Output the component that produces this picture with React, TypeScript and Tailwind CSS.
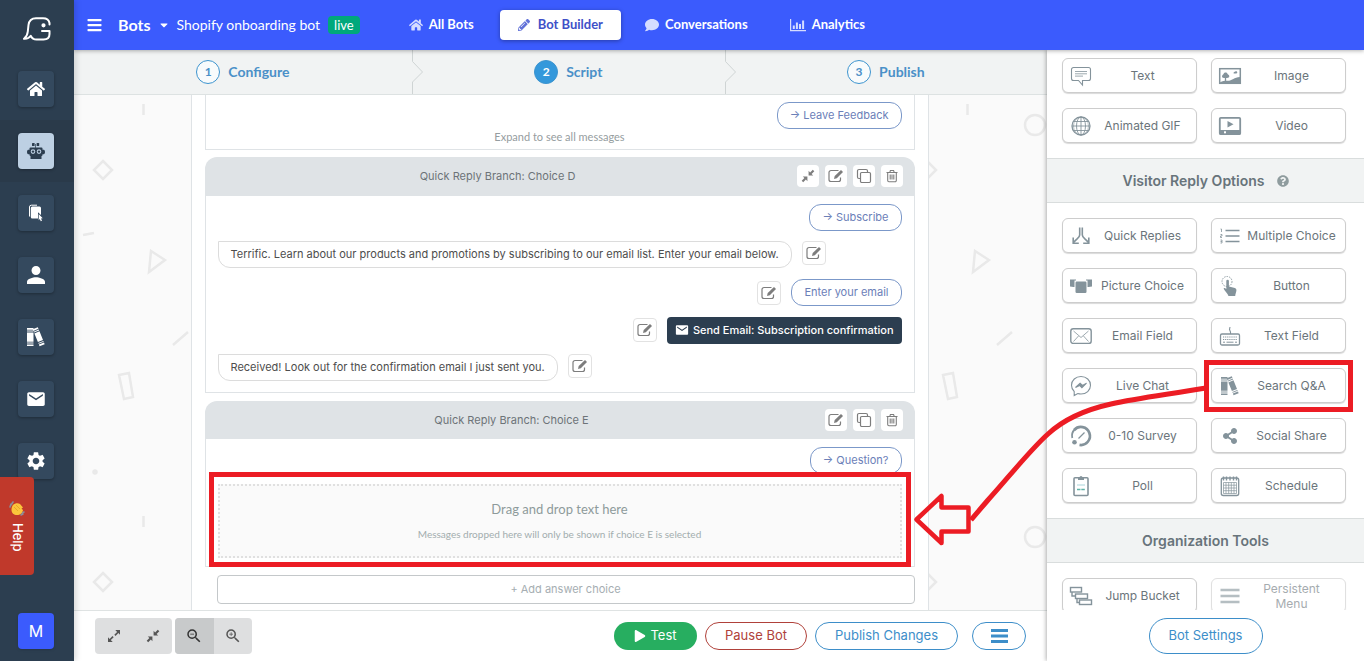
import React from "react";
import { FaBars, FaCaretDown, FaComment, FaHome, FaPencilAlt, FaPlay, FaQuestionCircle, FaShareAlt } from "react-icons/fa";
import { IoMdMail, IoMdPerson } from "react-icons/io";
import { MdSettings, MdZoomIn, MdZoomOut } from "react-icons/md";

type IconProps = { className?: string };

/* ---------- drawings ---------- */

const Logo = () => (
  <svg viewBox="0 0 28 24" className="h-6 w-7" fill="none" stroke="#fff" strokeWidth="2" strokeLinejoin="round" strokeLinecap="round">
    <path d="M26.500 7.500V6C26 3 23.500 1.200 20 1.200H13C8.500 1.200 6 4 5.500 8L4.800 14.500C4.400 18 3.500 20 1 21.800C4 22 6.200 21.200 7.800 18.800C9 21.500 11 22.500 13.500 22.500H20.500C24.300 22.500 26.500 20.500 26.500 17V14H19" />
    <circle cx="20.500" cy="8.300" r="1.100" fill="#fff" />
  </svg>
);

const Robot = ({ className }: IconProps) => (
  <svg viewBox="0 0 18 16" className={className} fill="currentColor">
    <rect x="5" y="0" width="2.600" height="3" rx="0.500" />
    <rect x="9.600" y="0" width="2.600" height="3" rx="0.500" />
    <path d="M8.300 1h.7v4h-.7z" />
    <path fillRule="evenodd" d="M3.500 4.500h11a1 1 0 0 1 1 1v1.300h1.300c.7 0 1.200 1.100 1.200 2.200s-.5 2.200-1.200 2.200h-1.300v.8a1 1 0 0 1-1 1h-11a1 1 0 0 1-1-1v-.8H1.200C.5 11.200 0 10.100 0 9s.5-2.200 1.200-2.200h1.300V5.500a1 1 0 0 1 1-1zM6 6.300a2.300 2.300 0 1 0 0 4.600 2.300 2.300 0 0 0 0-4.600zm6 0a2.300 2.300 0 1 0 0 4.600 2.300 2.300 0 0 0 0-4.600z" />
    <circle cx="6" cy="8.600" r="1.200" />
    <circle cx="12" cy="8.600" r="1.200" />
    <path d="M3.500 13h11v3h-11z" />
  </svg>
);

const Pages = ({ className }: IconProps) => (
  <svg viewBox="0 0 18 18" className={className} fill="currentColor">
    <path d="M2.500 12.500V3a1.800 1.800 0 0 1 1.800-1.800H10" fill="none" stroke="currentColor" />
    <path d="M5.300 2.600h7.200a1.500 1.500 0 0 1 1.500 1.500v7l-3-2.800v6.200H5.300a1.500 1.500 0 0 1-1.500-1.500V4.100a1.500 1.500 0 0 1 1.500-1.500z" />
    <path d="M11.700 10l4 4.200-1.700.3 1 2.200-1.200.6-1-2.300-1.100 1.200z" />
  </svg>
);

const Books = ({ className }: IconProps) => (
  <svg viewBox="0 0 20 20" className={className} fill="currentColor">
    <path d="M1 1h6.500v1.800H1zM1 3.600h6.500v1H1zM1 5.500h6.500v9.200H1zM1 15.600h6.500v1H1zM1 17.400h6.500V19H1z" />
    <g transform="rotate(-22 12 10)">
      <path d="M10 .8h5.500v1.800H10zM10 3.400h5.500v1H10zM10 5.300h5.500v9.400H10zM10 15.600h5.500v1H10zM10 17.400h5.500v1.700H10z" />
    </g>
  </svg>
);

const Wave = () => (
  <svg viewBox="0 0 16 16" className="h-4 w-4" fill="none">
    <path d="M2 4l2-3M1 6l1-3M12 14l2-1M13 12l2-1" stroke="#8b8f99" strokeWidth="1.600" strokeLinecap="round" />
    <path d="M4 4c2-2 5-2.500 7-1l3 3.500-1.500 1L14 9c-.5 3-3 5-6 5s-5.500-2-5.500-5C2.500 7 3 5 4 4z" fill="#fbc53b" />
    <path d="M7 4l4 4M5 6l4 4" stroke="#e2a023" strokeWidth="0.800" />
  </svg>
);

const BarChart = ({ className }: IconProps) => (
  <svg viewBox="0 0 16 14" className={className} fill="currentColor">
    <path d="M0 1h1.200v11H16v1.200H0zM2.800 7.500h2V11h-2zM5.900 4.500h2V11h-2zM9 6h2v5H9zM12.100 2.500h2V11h-2z" />
  </svg>
);

const EditIcon = ({ className }: IconProps) => (
  <svg viewBox="0 0 16 14" className={className} fill="none" stroke="currentColor">
    <path d="M10.500 1.500H3A2 2 0 0 0 1 3.500v7a2 2 0 0 0 2 2h7.500a2 2 0 0 0 2-2V8.500" strokeWidth="1.200" />
    <path d="M6 10l.7-2.900L13 1l2 2-6.200 6.300z" fill="currentColor" stroke="none" />
  </svg>
);

const CopyIcon = ({ className }: IconProps) => (
  <svg viewBox="0 0 16 16" className={className} fill="none" stroke="currentColor" strokeWidth="1.200">
    <path d="M4.500 10.500H3a1.500 1.500 0 0 1-1.500-1.500V3A1.500 1.500 0 0 1 3 1.500h7A1.500 1.500 0 0 1 11.500 3v1.500" />
    <rect x="4.500" y="4.500" width="10" height="10" rx="1.200" />
  </svg>
);

const TrashIcon = ({ className }: IconProps) => (
  <svg viewBox="0 0 14 14" className={className} fill="none" stroke="currentColor" strokeWidth="1.100">
    <path d="M1.500 3.500h11M4.800 3.300l.6-1.800h3.200l.6 1.800M2.700 3.500v8a1.200 1.200 0 0 0 1.200 1.200h6.200a1.200 1.200 0 0 0 1.200-1.200v-8M5.200 5.500v5M7 5.500v5M8.800 5.500v5" />
  </svg>
);

const Shrink = ({ className }: IconProps) => (
  <svg viewBox="0 0 14 14" className={className} fill="currentColor">
    <path d="M7.600 1.800v4.600h4.600l-1.600-1.500 2.700-2.600-1.500-1.500-2.700 2.600zM6.400 12.200V7.600H1.800l1.600 1.500-2.700 2.600 1.500 1.500 2.700-2.600z" />
  </svg>
);

const Grow = ({ className }: IconProps) => (
  <svg viewBox="0 0 14 14" className={className} fill="currentColor">
    <path d="M8.300 1H13v4.700l-1.600-1.600-2.900 2.900-1.200-1.200 2.800-2.900zM5.700 13H1V8.300l1.600 1.600L5.500 7l1.200 1.200L3.800 11.100z" />
  </svg>
);

const ToolGlyph = ({ name }: { name: string }) => {
  const svg = (children: React.ReactNode) => (
    <svg viewBox="0 0 24 24" className="h-6 w-6 shrink-0" fill="none" stroke="currentColor" strokeWidth="1.100">
      {children}
    </svg>
  );
  switch (name) {
    case "Text":
      return svg(
        <>
          <path d="M4.500 3.500h15a2 2 0 0 1 2 2v9a2 2 0 0 1-2 2h-6v4.500l-4-4.500h-5a2 2 0 0 1-2-2v-9a2 2 0 0 1 2-2z" />
          <path d="M6 7.500h12M6 9.800h12M6 12.100h8" strokeWidth="0.800" />
        </>
      );
    case "Image":
      return svg(
        <>
          <rect x="1.700" y="4.700" width="20.600" height="14.600" strokeWidth="1.500" />
          <path d="M2 18.500c4-2.500 7-1.500 9-1.800 3-.5 5-3 11-3.700v6.500H2z" fill="currentColor" stroke="none" />
          <path d="M7.500 17V11" strokeWidth="1.300" />
          <path d="M4 12.500c0-1.800 1.500-1.800 1.800-3 .6-1.300 3-1.300 3.500 0 .4 1 2 1.200 2 2.800 0 1.700-2 1.900-3.800 1.400C5.700 14.200 4 14 4 12.500zM15.500 9c0-1 1.200-1.200 1.800-1.600.9-.6 1.900.1 2 .8 0 .8-.7 1.300-1.700 1.300S15.500 9.800 15.500 9z" fill="currentColor" stroke="none" />
        </>
      );
    case "Animated GIF":
      return svg(
        <>
          <circle cx="12" cy="12" r="9" strokeWidth="1.300" />
          <path d="M12 3v18M3 12h18M4.500 7.500h15M4.500 16.500h15" strokeWidth="0.900" />
          <ellipse cx="12" cy="12" rx="4.500" ry="9" strokeWidth="0.900" />
          <ellipse cx="12" cy="12" rx="7.500" ry="9" strokeWidth="0.600" />
        </>
      );
    case "Video":
      return svg(
        <>
          <rect x="1.800" y="3.800" width="20.400" height="16.400" rx="1" strokeWidth="1.800" />
          <path d="M2 16h20v4.500H2z" fill="currentColor" stroke="none" />
          <path d="M9.500 7l6 3.200-6 3.200z" fill="currentColor" stroke="none" />
          <rect x="6" y="17.300" width="2" height="2" fill="#fff" stroke="none" />
        </>
      );
    case "Quick Replies":
      return svg(
        <>
          <path d="M10.700 3.500v7.500c0 3-3.500 4-6 7.500M13.300 3.500v7.500c0 3 3.500 4 6 7.500" strokeWidth="1.600" />
          <path d="M4.200 13.500v5.700h5.600M19.800 13.500v5.700h-5.600" strokeWidth="1.600" />
        </>
      );
    case "Multiple Choice":
      return svg(
        <>
          <path d="M7.500 6.500h14M7.500 12h14M7.500 17.500h14" strokeWidth="1.500" />
          <path d="M2.500 5h1v3M2.500 10.500h1.500v1.500H2.500v1.500H4M2.500 16H4v3H2.500M2.500 17.500H4" strokeWidth="0.800" />
        </>
      );
    case "Picture Choice":
      return svg(
        <g fill="currentColor" stroke="none">
          <path d="M1 5.500h6v1H5.500v6.500H4.500L1 12.500zM17 5.500h6v7l-3.500.5h-1V6.500H17z" />
          <rect x="6.500" y="7.500" width="11" height="11.500" rx="1.200" />
        </g>
      );
    case "Button":
      return svg(
        <>
          <circle cx="9" cy="7.500" r="5" strokeWidth="0.900" strokeDasharray="1.500 1" />
          <path d="M8.300 7a1.300 1.300 0 0 1 2.600 0v5.500l6 1.500c1.200.4 1.600 1.300 1.500 2.500-.2 2-.9 3-1.200 5.500h-6.700c-.7-2.500-3.500-4.500-4.700-7-.4-1.200 1-1.500 2.500.1z" fill="currentColor" stroke="none" />
        </>
      );
    case "Email Field":
      return svg(
        <>
          <rect x="1.800" y="4.800" width="20.400" height="14.600" rx="2.500" strokeWidth="1.400" />
          <path d="M4.500 7l7.500 6.500L19.500 7M4.500 17.500l5-5.500M19.500 17.500l-5-5.500" strokeWidth="0.800" />
        </>
      );
    case "Text Field":
      return svg(
        <>
          <rect x="2.500" y="10" width="19" height="11" rx="1.500" strokeWidth="1.300" />
          <path d="M12.500 10V8L11.500 5.500 12 3" strokeWidth="1.100" />
          <path d="M5 13h14M5 15.500h14" strokeWidth="1" strokeDasharray="1.200 0.900" />
          <path d="M5 18.200h2M8.500 18.200h7M17 18.200h2" strokeWidth="1" />
        </>
      );
    case "Live Chat":
      return svg(
        <>
          <path d="M12 2.500c5.300 0 9.500 3.700 9.500 8.800s-4.200 8.700-9.500 8.700c-1.200 0-2.200-.2-3.200-.5L5.200 21.500v-4C3.500 15.900 2.500 13.700 2.500 11.300 2.500 6.200 6.700 2.500 12 2.500z" />
          <path d="M6.500 13.500l4.600-4.300 2.400 2.300 4-2.300-4.600 4.500-2.300-2.300z" fill="currentColor" />
        </>
      );
    case "Search Q&A":
      return <Books className="h-6 w-6 shrink-0 p-0.5" />;
    case "0-10 Survey":
      return svg(
        <>
          <path d="M3.300 14A9 9 0 0 1 5.600 5.500" strokeWidth="1.800" />
          <path d="M5.200 6A9 9 0 1 1 10.500 20.900" strokeWidth="2.700" />
          <path d="M9.500 14.500l6-6" strokeWidth="1.200" />
          <circle cx="5.500" cy="18.300" r="2.300" fill="currentColor" stroke="none" />
        </>
      );
    case "Social Share":
      return <FaShareAlt className="m-1 h-4 w-4 shrink-0" />;
    case "Poll":
      return svg(
        <>
          <rect x="5" y="3.800" width="14" height="17.700" rx="1" strokeWidth="1.600" />
          <path d="M9 3.500h1.500a1.500 1.500 0 0 1 3 0H15V6H9z" fill="currentColor" stroke="none" />
          <path d="M8 11h8" stroke="#9fd0d6" strokeWidth="0.900" />
          <path d="M8 15.500h8" stroke="#5fb3a8" strokeWidth="1.500" strokeDasharray="3.500 0.800" />
        </>
      );
    case "Schedule":
      return svg(
        <>
          <rect x="3.300" y="4" width="17.400" height="17.500" rx="2" strokeWidth="1.300" />
          <path d="M5.500 2.500v4M8.500 2.500v4M12 2.500v4M15.500 2.500v4M18.500 2.500v4" strokeWidth="1.400" />
          <path d="M5.500 8.500h13v11h-13zM5.500 11.200h13M5.500 14h13M5.500 16.700h13M8 8.500v11M10.700 8.500v11M13.300 8.500v11M16 8.500v11" strokeWidth="0.700" />
        </>
      );
    case "Jump Bucket":
      return svg(
        <>
          <rect x="1.500" y="3.500" width="11" height="4.500" strokeWidth="1.400" />
          <rect x="6.500" y="10" width="12" height="4.500" strokeWidth="1.400" />
          <rect x="10.500" y="16" width="12" height="4.500" strokeWidth="1.400" />
          <path d="M3 8v4h3.500M8 14.500v4h2.500" strokeWidth="1.400" />
        </>
      );
    default:
      return svg(<path d="M2.500 6h19M2.500 12h19M2.500 18h19" strokeWidth="2.500" />);
  }
};

const BackgroundShapes = () => (
  <svg className="absolute inset-0 h-full w-full" aria-hidden="true">
    <defs>
      <pattern id="confetti" width="824" height="412" patternUnits="userSpaceOnUse">
        <g fill="none" stroke="#e9e9e9" strokeWidth="2.500">
          <path d="M69.500 9v11" />
          <path d="M29 66l9 9-9 9-9-9z" />
          <path d="M9 140l11-2M77 156l14 9-16 12zM99 250l15-13" />
          <path d="M45 280l10-2 4 24-9 2z" />
          <circle cx="21" cy="377" r="1.500" />
        </g>
      </pattern>
    </defs>
    <rect width="100%" height="100%" fill="url(#confetti)" />
    <g fill="none" stroke="#e9e9e9" strokeWidth="2.500">
      <circle cx="961" cy="30" r="10" />
      <circle cx="961" cy="442" r="10" />
    </g>
  </svg>
);

/* ---------- shell ---------- */

const sideItems = [
  { label: "Home", icon: <FaHome className="h-[18px] w-[18px]" /> },
  { label: "Bots", icon: <Robot className="h-4 w-[18px]" />, active: true },
  { label: "Pages", icon: <Pages className="h-[18px] w-[18px]" /> },
  { label: "People", icon: <IoMdPerson className="h-6 w-6" /> },
  { label: "Library", icon: <Books className="h-5 w-5" /> },
  { label: "Mail", icon: <IoMdMail className="h-5 w-5" /> },
  { label: "Settings", icon: <MdSettings className="h-[22px] w-[22px]" /> },
];

const Sidebar = () => (
  <nav className="relative z-30 flex w-[74px] shrink-0 flex-col bg-[#2c3e50] shadow-[2px_0_6px_rgba(0,0,0,0.15)]">
    <a href="#home" aria-label="Dashboard" className="flex h-[58px] items-center justify-center">
      <Logo />
    </a>
    {sideItems.map((item) => (
      <div key={item.label} className={`flex h-[62px] items-center pl-[18px] ${item.active ? "bg-[#2a3a4a]" : ""}`}>
        <a
          href={`#${item.label.toLowerCase()}`}
          aria-label={item.label}
          className={`flex h-9 w-9 items-center justify-center rounded shadow-[0_1px_3px_rgba(0,0,0,0.3)] ${item.active ? "bg-[#bdd0e3] text-[#2c3e50]" : "bg-[#34495e] text-white"}`}
        >
          {item.icon}
        </a>
      </div>
    ))}
    <button type="button" aria-label="Account M" className="mt-auto mb-3 ml-[18px] h-9 w-9 rounded bg-[#3b5bfd] text-base text-white shadow">
      M
    </button>
    <button type="button" className="absolute bottom-[86px] left-0 flex h-[98px] w-[34px] items-center justify-center rounded-r bg-[#c0392b] text-white">
      <span className="flex items-center gap-1.5 text-[13px] font-medium [writing-mode:vertical-rl]">
        <Wave />
        Help
      </span>
    </button>
  </nav>
);

const navLink = "flex h-[30px] items-center gap-1.5 text-[13px] font-bold text-white";

const TopBar = () => (
  <header className="z-20 flex h-[50px] shrink-0 items-center bg-[#3b5bfd] pl-[13px] font-[Lato,sans-serif] text-white shadow-[0_1px_4px_rgba(0,0,0,0.3)]">
    <button type="button" aria-label="Menu" className="mr-4">
      <FaBars className="h-4 w-[15px]" />
    </button>
    <button type="button" className="mr-1.5 flex items-center gap-2 text-base font-bold">
      Bots
      <FaCaretDown className="h-3 w-3" />
    </button>
    <span className="mr-2 text-sm">Shopify onboarding bot</span>
    <span className="mr-[49px] rounded bg-[#00a87c] px-1.5 py-0.5 text-[13px] leading-[14px]">live</span>
    <nav className="flex items-center">
      <a href="#all" className={navLink}>
        <FaHome className="h-3.5 w-3.5 text-[#d5dcff]" />
        All Bots
      </a>
      <a href="#builder" className="mr-6 ml-[26px] flex h-[30px] items-center gap-2 rounded bg-white px-[18px] text-[13px] font-bold text-[#4050c8] shadow-[0_1px_4px_rgba(0,0,0,0.35)]">
        <FaPencilAlt className="h-3 w-3 text-[#6272d8]" />
        Bot Builder
      </a>
      <a href="#conversations" className={navLink}>
        <FaComment className="h-3.5 w-3.5 text-[#d5dcff]" />
        Conversations
      </a>
      <a href="#analytics" className={`${navLink} ml-[42px]`}>
        <BarChart className="h-3.5 w-4 text-[#d5dcff]" />
        Analytics
      </a>
    </nav>
  </header>
);

const steps = [
  { n: 1, label: "Configure" },
  { n: 2, label: "Script", active: true },
  { n: 3, label: "Publish" },
];

const Steps = () => (
  <ol className="relative z-10 flex h-[45px] shrink-0 border-b border-[#dde2e2] bg-[#f1f3f3] font-[Lato,sans-serif]">
    {steps.map((s) => (
      <li key={s.n} className="relative flex flex-auto items-center justify-center">
        <a href={`#step-${s.n}`} className="flex items-center gap-2 text-sm font-bold text-[#4a90c8]">
          <span className={`flex h-6 w-6 items-center justify-center rounded-full border border-[#3d94cf] text-xs ${s.active ? "bg-[#3498db] text-white" : "bg-[#f8fbfc]"}`}>
            {s.n}
          </span>
          {s.label}
        </a>
        {s.n < 3 && (
          <svg viewBox="0 0 12 44" className="absolute top-0 -right-3 h-11 w-3" fill="none" stroke="#cfd4d4">
            <path d="M.5 0v11.500l10 10.500-10 10V44" />
          </svg>
        )}
      </li>
    ))}
  </ol>
);

/* ---------- script editor ---------- */

const actionIcons = {
  Collapse: <Shrink className="h-3.5 w-3.5" />,
  Edit: <EditIcon className="h-3.5 w-4" />,
  Duplicate: <CopyIcon className="h-4 w-4" />,
  Delete: <TrashIcon className="h-3.5 w-3.5" />,
};
type Action = keyof typeof actionIcons;

const CardHeader = ({ title, actions }: { title: string; actions: Action[] }) => (
  <div className="flex h-[38px] items-center justify-end gap-1.5 rounded-t-xl bg-[#dfe3e6] pr-3">
    <div className="flex-1 text-center text-[11px] text-[#6d7378]">{title}</div>
    <div className="flex gap-1.5">
      {actions.map((a) => (
        <button key={a} type="button" aria-label={a} className="flex h-[22px] w-[22px] items-center justify-center rounded bg-white text-[#7d7d7d]">
          {actionIcons[a]}
        </button>
      ))}
    </div>
  </div>
);

const Reply = ({ children }: { children: React.ReactNode }) => (
  <button type="button" className="h-[27px] rounded-xl border border-[#7b98c9] bg-white px-3 text-[11px] text-[#6b80b8]">
    {children}
  </button>
);

const EditButton = () => (
  <button type="button" aria-label="Edit message" className="flex h-6 w-6 items-center justify-center rounded border border-[#e2e2e2] bg-white text-[#7d7d7d]">
    <EditIcon className="h-3.5 w-4" />
  </button>
);

const BotMessage = ({ children }: { children: React.ReactNode }) => (
  <div className="flex h-7 items-start gap-2.5">
    <p className="flex h-[27px] items-center rounded-b-xl rounded-tr-xl border border-[#dcdcdc] px-3 text-[11px] text-[#4d4d4d]">{children}</p>
    <EditButton />
  </div>
);

const Editor = () => (
  <main className="relative min-h-0 flex-1 overflow-hidden bg-[#fafafa] pr-0.5">
    <BackgroundShapes />
    <div className="relative mx-auto h-full max-w-[738px] border-x border-[#dfe3e6] bg-white px-[13px]">
      <section className="mb-[7px] flex h-[55px] flex-col border border-t-0 border-[#dfe3e6] px-3 pt-[7px]">
        <div className="flex justify-end">
          <Reply>→ Leave Feedback</Reply>
        </div>
        <p className="text-center font-[Lato,sans-serif] text-[11px] leading-4 text-[#959da0]">Expand to see all messages</p>
      </section>

      <section>
        <CardHeader title="Quick Reply Branch: Choice D" actions={["Collapse", "Edit", "Duplicate", "Delete"]} />
        <div className="flex flex-col gap-2.5 border border-[#dfe3e6] px-3 pt-2 pb-2.5">
          <div className="flex justify-end">
            <Reply>→ Subscribe</Reply>
          </div>
          <BotMessage>Terrific. Learn about our products and promotions by subscribing to our email list. Enter your email below.</BotMessage>
          <div className="flex items-center justify-end gap-2.5">
            <EditButton />
            <Reply>Enter your email</Reply>
          </div>
          <div className="flex h-7 items-center justify-end gap-2.5">
            <EditButton />
            <button type="button" className="flex h-[27px] items-center gap-1 rounded bg-[#2c3e50] px-2 text-[11px] font-medium text-white">
              <IoMdMail className="h-3.5 w-3.5" />
              Send Email: Subscription confirmation
            </button>
          </div>
          <BotMessage>Received! Look out for the confirmation email I just sent you.</BotMessage>
        </div>
      </section>

      <section className="mt-2">
        <CardHeader title="Quick Reply Branch: Choice E" actions={["Edit", "Duplicate", "Delete"]} />
        <div className="flex flex-col gap-2.5 border border-t-0 border-[#dfe3e6] px-3 pt-2 pb-2">
          <div className="flex justify-end">
            <Reply>→ Question?</Reply>
          </div>
          <div className="relative flex h-[74px] flex-col items-center justify-center gap-2 border-2 border-dotted border-[#e0e0e0] bg-[#fafafa] font-[Lato,sans-serif]">
            <p className="text-[13px] text-[#8e9a9b]">Drag and drop text here</p>
            <p className="text-[10px] text-[#a2adae]">Messages dropped here will only be shown if choice E is selected</p>
            <div className="pointer-events-none absolute -inset-x-[11px] -top-[14px] -bottom-[11px] border-[5px] border-[#ec1c24]" />
          </div>
        </div>
      </section>

      <div className="pl-3">
        <button type="button" className="mt-2 h-[29px] w-full rounded-sm border border-[#c4c8ca] text-[11px] text-[#a6aeb2]">
          + Add answer choice
        </button>
      </div>
    </div>
  </main>
);

const Toolbar = () => (
  <footer className="flex h-[51px] shrink-0 items-center border-t border-[#dfe3e3] bg-white pr-[21px] pl-[21px]">
    <div className="mr-[3px] flex h-9 w-[77px] rounded bg-[#dedfe0] text-[#555]">
      <button type="button" aria-label="Expand all" className="flex flex-1 items-center justify-center">
        <Grow className="h-3.5 w-3.5" />
      </button>
      <button type="button" aria-label="Collapse all" className="flex flex-1 items-center justify-center">
        <Shrink className="h-3.5 w-3.5" />
      </button>
    </div>
    <div className="flex h-9 w-[77px] overflow-hidden rounded bg-[#dedfe0] text-[#555]">
      <button type="button" aria-label="Zoom out" className="flex flex-1 items-center justify-center bg-[#c8cacb] text-[#333]">
        <MdZoomOut className="h-[18px] w-[18px]" />
      </button>
      <button type="button" aria-label="Zoom in" className="flex flex-1 items-center justify-center">
        <MdZoomIn className="h-[18px] w-[18px]" />
      </button>
    </div>
    <div className="ml-auto flex gap-2 text-[13px]">
      <button type="button" className="flex h-7 w-[83px] items-center justify-center gap-1 rounded-full bg-[#27ae60] text-white">
        <FaPlay className="h-3 w-3" />
        Test
      </button>
      <button type="button" className="h-7 w-[102px] rounded-full border border-[#b0413a] text-[#b0413a]">
        Pause Bot
      </button>
      <button type="button" className="h-7 w-[143px] rounded-full border border-[#3d8ec9] text-[#3d8ec9]">
        Publish Changes
      </button>
      <button type="button" aria-label="More" className="ml-1.5 flex h-7 w-[54px] items-center justify-center rounded-full border border-[#3d8ec9] text-[#3d8ec9]">
        <svg viewBox="0 0 17 14" className="h-3.5 w-[17px]" fill="currentColor">
          <path d="M0 0h17v3H0zM0 5.500h17v3H0zM0 11h17v3H0z" />
        </svg>
      </button>
    </div>
  </footer>
);

/* ---------- tools panel ---------- */

const replyTools = [
  "Quick Replies", "Multiple Choice", "Picture Choice", "Button", "Email Field", "Text Field",
  "Live Chat", "Search Q&A", "0-10 Survey", "Social Share", "Poll", "Schedule",
];

const Tool = ({ name }: { name: string }) => (
  <div className="relative">
    <button
      type="button"
      disabled={name === "Persistent Menu"}
      className="flex h-[35px] w-full items-center rounded-md border border-[#cdcdcd] bg-white pl-1.5 text-[#84939b] shadow-[0_1px_1px_rgba(0,0,0,0.15)] disabled:opacity-60"
    >
      <ToolGlyph name={name} />
      <span className="flex-1 pr-2 pl-1 text-center text-xs leading-[15px] text-[#6b757b]">{name}</span>
    </button>
    {name === "Search Q&A" && <div className="pointer-events-none absolute -inset-x-[7px] -top-2 -bottom-[9px] border-[5px] border-[#ec1c24]" />}
  </div>
);

const ToolGrid = ({ names }: { names: string[] }) => (
  <div className="grid grid-cols-2 gap-x-3.5 gap-y-[15px] py-[15px] pr-[18px] pl-[15px]">
    {names.map((n) => (
      <Tool key={n} name={n} />
    ))}
  </div>
);

const SectionTitle = ({ children }: { children: React.ReactNode }) => (
  <h2 className="flex h-[45px] items-center justify-center gap-3 border-y border-[#d9dddd] bg-[#f1f3f3] text-sm font-semibold text-[#68747b]">{children}</h2>
);

const ToolsPanel = () => (
  <aside className="z-10 flex w-[317px] shrink-0 flex-col bg-white shadow-[-1px_0_4px_rgba(0,0,0,0.3)]">
    <div className="min-h-0 flex-1 overflow-hidden">
      <div className="-mt-[7px]">
        <ToolGrid names={["Text", "Image", "Animated GIF", "Video"]} />
      </div>
      <SectionTitle>
        Visitor Reply Options
        <FaQuestionCircle className="h-3 w-3 text-[#8f9c9e]" />
      </SectionTitle>
      <ToolGrid names={replyTools} />
      <SectionTitle>Organization Tools</SectionTitle>
      <ToolGrid names={["Jump Bucket", "Persistent Menu"]} />
    </div>
    <div className="flex h-[51px] shrink-0 items-center justify-center">
      <button type="button" className="h-9 w-[114px] rounded-full border border-[#3d8ec9] text-[13px] text-[#3d8ec9]">
        Bot Settings
      </button>
    </div>
  </aside>
);

const DropArrow = () => (
  <svg viewBox="0 0 294 170" className="pointer-events-none absolute top-[380px] right-[156px] z-40 h-[170px] w-[294px]" fill="none" stroke="#ec1c24" aria-hidden="true">
    <path d="M292 8C250 15 223 18 197 24C170 30 148 41 134 54C116 70 94 98 74 120C68 127 62 134 57 140" strokeWidth="5" />
    <path d="M2.500 139.500L27.500 116V127.500H54.500V151.500H27.500V163z" strokeWidth="4.500" strokeLinejoin="round" />
  </svg>
);

export default function App() {
  return (
    <div className="relative flex h-screen min-h-[661px] overflow-hidden font-[Inter,sans-serif]">
      <Sidebar />
      <div className="flex min-w-0 flex-1 flex-col">
        <TopBar />
        <div className="flex min-h-0 flex-1">
          <div className="flex min-w-0 flex-1 flex-col">
            <Steps />
            <Editor />
            <Toolbar />
          </div>
          <ToolsPanel />
        </div>
      </div>
      <DropArrow />
    </div>
  );
}
